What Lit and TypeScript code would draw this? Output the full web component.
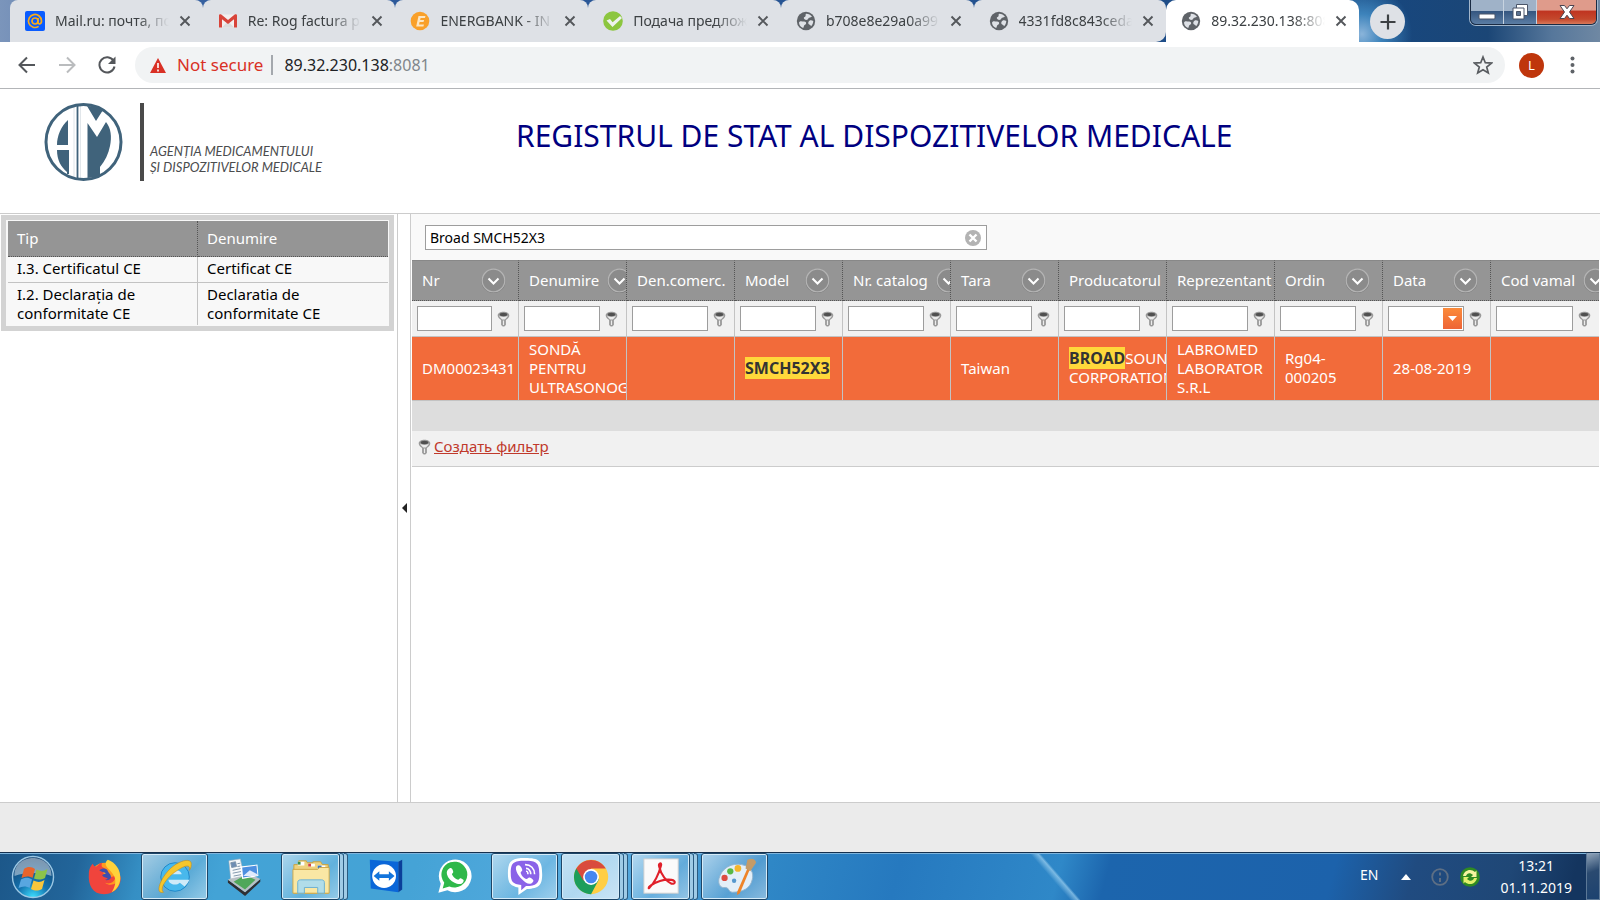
import { LitElement, html, css, svg, nothing } from "lit";
import { customElement, property } from "lit/decorators.js";
import { classMap } from "lit/directives/class-map.js";

const globe = svg`<circle cx="10" cy="10" r="9.2" fill="#5f6368"/><path d="M3 11.500C4 9.500 6 10.500 8 10.600c2 .1 2.400 1 2 2.400-.8 1-2 1-2.200 2.400 0 1.200-.6 1.600-1.300 1.300C4.200 15.500 3 13.500 3 11.500zM10 2.800c2.500-.1 4.600 1 6 3-1.200 0-1.400 1-2.800 1-1 .1-.8 1.600-2 2-1.600.4-3.600-.6-3.400-2 .2-1 1.600-.8 1.800-1.800.2-.8-.2-1.500.4-2.200zM13.500 9.800c1-.8 2.600-.4 3.800.2-.1 2-.9 4-2.300 5.200-.4-1.400-2.300-1.200-2.700-2.600-.2-1.100.3-2.200 1.200-2.800z" fill="#dee1e6"/>`;

const favicons: Record<string, unknown> = {
  mail: svg`<rect width="20" height="20" rx="2" fill="#0a5cff"/><circle cx="10" cy="10" r="3" fill="none" stroke="#f9ab1a" stroke-width="1.700"/><path d="M13 7v4.300c0 2.300 3.500 2.200 3.500-1.300A6.500 6.500 0 1 0 13.600 15.400" fill="none" stroke="#f9ab1a" stroke-width="1.700"/>`,
  gmail: svg`<path d="M1 3.500h18v13H1z" fill="#f3efef"/><path d="M4 16.500 10 10l6 6.500z" fill="#dcdcdc"/><path d="M1 16.500V4.500C1 3 2.500 3 3.300 3.600L10 9l6.700-5.400C17.500 3 19 3 19 4.500v12h-3V8.200L10 13 4 8.200v8.300z" fill="#d8443a"/>`,
  energ: svg`<circle cx="10" cy="10" r="9.300" fill="#f9a02a"/><path d="M8.500 5h7l-.6 2h-4.300l-.5 2h4l-.6 2H9.600l-.6 2.500h5l-.6 2H6.200z" fill="#fde6c2"/>`,
  check: svg`<circle cx="10" cy="10" r="9.800" fill="#8cc63f"/><path d="M3.500 9.500 7 8l2.600 3.300L17 5l2 2-9.500 9z" fill="#eef3ee"/>`,
  globe,
};

const tabs = [
  { icon: "mail", title: "Mail.ru: почта, по" },
  { icon: "gmail", title: "Re: Rog factura p" },
  { icon: "energ", title: "ENERGBANK - IN" },
  { icon: "check", title: "Подача предлож" },
  { icon: "globe", title: "b708e8e29a0a99" },
  { icon: "globe", title: "4331fd8c843ceda" },
  { icon: "globe", title: "89.32.230.138:808", active: true },
];

const columns = [
  "Nr", "Denumire", "Den.comerc.", "Model", "Nr. catalog", "Tara",
  "Producatorul", "Reprezentant", "Ordin", "Data", "Cod vamal",
];

const certificates = [
  ["I.3. Certificatul CE", "Certificat CE"],
  ["I.2. Declarația de conformitate CE", "Declaratia de conformitate CE"],
];

const keyIcon = html`<svg class="key" viewBox="0 0 13 16" width="13" height="16" aria-hidden="true">
  <path d="M6.500.8C3.300.8.7 2.300.7 4.400c0 2 1.600 2.900 3.400 4.600v5l1.600 1.400h1.600L8.900 14V9c1.800-1.700 3.400-2.600 3.400-4.600C12.300 2.300 9.700.8 6.500.8z" fill="#9a9a9a"/>
  <path d="M6.500 5.800c2 0 3.600-.6 4.300-1.400 0 1.500-1.700 2.600-2.900 4H5.100c-1.200-1.400-2.900-2.500-2.900-4 .7.8 2.300 1.400 4.300 1.400zM5.900 9.500h1.200V14H5.900z" fill="#ececec"/>
  <ellipse cx="6.500" cy="3.500" rx="3.800" ry="1.700" fill="#505050"/></svg>`;

const cross = html`<svg viewBox="0 0 12 12" width="12" height="12" aria-hidden="true"><path d="M1.500 1.500l9 9M10.500 1.500l-9 9" stroke="#54575b" stroke-width="1.900"/></svg>`;

@customElement("browser-chrome")
export class BrowserChrome extends LitElement {
  static styles = css`
    :host { display: block; font-family: "Noto Sans", "Open Sans", sans-serif; color: #3c4043; }
    button { border: 0; padding: 0; margin: 0; background: none; font: inherit; color: inherit; }
    svg { display: block; flex: none; }
    .strip {
      display: flex; height: 42px; padding-left: 10px;
      background:
        radial-gradient(circle at 1362px 34px, #8ab4da 0, #3d83bb 20px, transparent 50px),
        linear-gradient(90deg, #7b95bb 0, #2f5b9d 14%, #245290 60%, #17477f 86%, #1b4676 93%, #56779b 97%, #6f88a3 100%);
    }
    .tabs { display: flex; flex: 0 1 1349px; min-width: 0; }
    .tab {
      flex: 1 1 0; min-width: 0; display: flex; align-items: center;
      padding: 0 8px 0 15px; background: #dee1e6; border-radius: 8px 8px 0 0; position: relative;
    }
    .tab.divided::after {
      content: ""; position: absolute; right: -1px; top: 9px; height: 25px; width: 1px; background: #85888d;
    }
    .tab.before-active { border-radius: 8px 8px 10px 0; }
    .tab.active { background: #fff; border-radius: 10px 10px 0 0; }
    .title {
      flex: 1; min-width: 0; margin: 0 6px 0 10px; overflow: hidden; white-space: nowrap; text-align: left;
      font-size: 14px; line-height: 20px;
      -webkit-mask-image: linear-gradient(90deg, #000 calc(100% - 32px), transparent);
      mask-image: linear-gradient(90deg, #000 calc(100% - 32px), transparent);
    }
    .close { width: 20px; height: 20px; display: grid; place-items: center; }
    .new { width: 35px; height: 35px; margin: 4px 0 0 11px; border-radius: 50%; background: #dee1e6; display: grid; place-items: center; flex: none; }
    .window {
      margin: 0 3px 0 auto; height: 24px; display: flex; flex: none; border: 1px solid #1a2b43; border-top: 0;
      border-radius: 0 0 6px 6px; overflow: hidden; box-shadow: 0 0 0 1px #a3b7cc;
    }
    .window button { display: grid; place-items: center; width: 33px; background: linear-gradient(#9fb2c8 0 45%, #34557f 46%, #5b7da4); border-right: 1px solid #c7d3e0; }
    .window .quit { width: 59px; border-right: 0; background: linear-gradient(#df9b8b 0 42%, #c03420 46%, #c4482d 80%, #d8795a); }
    .bar { display: flex; align-items: center; height: 46px; background: #fff; border-bottom: 1px solid #b3b5b8; padding: 0 16px; }
    .nav { width: 40px; height: 40px; display: grid; place-items: center; flex: none; }
    .navs { display: flex; margin-left: -9px; }
    .omnibox {
      flex: 1; display: flex; align-items: center; height: 36px; border-radius: 18px; background: #f1f3f4;
      margin: 0 14px 0 8px; padding: 0 12px 0 15px; font-size: 17px; line-height: 22px; min-width: 0;
    }
    .warn { color: #d93025; margin-left: 11px; }
    .pipe { width: 2px; height: 20px; background: #a4a8ad; margin: 0 11px 0 8px; }
    .url { flex: 1; color: #202124; white-space: nowrap; font-size: 16px; }
    .port { color: #80868b; }
    .avatar { width: 25px; height: 25px; border-radius: 50%; background: #bf360c; color: #fff; font-size: 13px; display: grid; place-items: center; margin-right: 20px; }
    .dots { width: 16px; height: 24px; display: grid; place-items: center; margin-right: 4px; }
  `;

  render() {
    return html`
      <div class="strip">
        <div class="tabs">
          ${tabs.map((t, i) => html`
            <div class=${classMap({ tab: true, active: !!t.active, "before-active": i === 5, divided: i < 5 })}>
              <svg viewBox="0 0 20 20" width="20" height="20" aria-hidden="true">${favicons[t.icon]}</svg>
              <button class="title">${t.title}</button>
              <button class="close" aria-label="Close tab">${cross}</button>
            </div>`)}
        </div>
        <button class="new" aria-label="New tab"><svg width="16" height="16" viewBox="0 0 16 16"><path d="M8 .5v15M.5 8h15" stroke="#3c4043" stroke-width="2.200"/></svg></button>
        <div class="window">
          <button aria-label="Minimize"><svg width="18" height="16" viewBox="0 0 18 16"><rect x="1" y="10" width="16" height="5" rx="1" fill="#fff" stroke="#4a5568"/></svg></button>
          <button aria-label="Restore"><svg width="18" height="18" viewBox="0 0 18 18"><path d="M5.500 1.500h11v11h-11z" fill="#fff" stroke="#4a5568"/><path d="M2 5h11v11H2z" fill="#fff" stroke="#4a5568"/><path d="M5.500 8.500h4v4h-4z" fill="#5c7391" stroke="#4a5568"/></svg></button>
          <button class="quit" aria-label="Close"><svg width="16" height="16" viewBox="0 0 16 16"><path d="M1 1.500h4.500L8 4.800l2.500-3.300H15L10.500 8l4.500 6.500h-4.500L8 11.200l-2.500 3.300H1L5.500 8z" fill="#fff" stroke="#4c4450"/></svg></button>
        </div>
      </div>
      <div class="bar">
        <div class="navs">
          <button class="nav" aria-label="Back"><svg width="18" height="18" viewBox="0 0 18 18"><path d="M17 9H2M9 1.500 1.500 9 9 16.500" fill="none" stroke="#54575b" stroke-width="2"/></svg></button>
          <button class="nav" aria-label="Forward"><svg width="18" height="18" viewBox="0 0 18 18"><path d="M1 9h15M9 1.500 16.500 9 9 16.500" fill="none" stroke="#babcbe" stroke-width="2"/></svg></button>
          <button class="nav" aria-label="Reload"><svg width="18" height="18" viewBox="0 0 18 18"><path d="M15.500 4.800A7.600 7.600 0 1 0 16.500 10.500" fill="none" stroke="#54575b" stroke-width="2"/><path d="M17.500.5V8H10z" fill="#54575b"/></svg></button>
        </div>
        <div class="omnibox">
          <svg width="16" height="15" viewBox="0 0 16 15" aria-hidden="true"><path d="M8 0l8 15H0z" fill="#d93025"/><path d="M8 5v5M8 11.500v2" stroke="#fff" stroke-width="1.600"/></svg>
          <span class="warn">Not secure</span><span class="pipe"></span>
          <span class="url">89.32.230.138<span class="port">:8081</span></span>
          <button aria-label="Bookmark"><svg width="20" height="20" viewBox="0 0 20 20"><path d="M10 2l2.300 5.700 6.200.4-4.800 3.900 1.600 6L10 14.700 4.700 18l1.600-6L1.500 8.100l6.200-.4z" fill="none" stroke="#5a5d61" stroke-width="1.700"/></svg></button>
        </div>
        <button class="avatar">L</button>
        <button class="dots" aria-label="Menu"><svg width="5" height="18" viewBox="0 0 5 18"><g fill="#5f6368"><circle cx="2.500" cy="2.500" r="2"/><circle cx="2.500" cy="9" r="2"/><circle cx="2.500" cy="15.500" r="2"/></g></svg></button>
      </div>`;
  }
}

@customElement("registry-page")
export class RegistryPage extends LitElement {
  static styles = css`
    :host { display: flex; flex-direction: column; min-height: 0; background: #fff; color: #000;
      font: 15px/19px "Noto Sans", "Open Sans", sans-serif; }
    * { box-sizing: border-box; }
    svg { display: block; flex: none; }
    header { display: flex; height: 125px; border-bottom: 1px solid #ccc; padding: 14px 0 0 44px; }
    .brand { display: flex; width: 472px; height: 78px; }
    .rule { width: 4px; margin: 0 6px 0 17px; background: #4a4a4a; }
    .agency { align-self: flex-end; font: italic 13px/16px Lato, sans-serif; color: #4b4c4e; padding-bottom: 6px; white-space: nowrap; }
    h1 { margin: 12px 0 0; font: 400 30px/42px "Noto Sans", sans-serif; color: #000080; white-space: nowrap; }
    main { display: flex; flex: 1; min-height: 0; }
    .side { width: 398px; border-right: 1px solid #ccc; padding: 1px 3px 0 1px; flex: none; }
    .frame { border: 5px solid #d3d3d3; padding: 1px 1px 1px 2px; background: #f8f8f8; }
    table { border-collapse: separate; border-spacing: 0; table-layout: fixed; width: 100%; }
    th { font-weight: 400; text-align: left; color: #fff; background: #959595; }
    .docs th { height: 36px; padding: 0 9px; border-bottom: 1px dotted #555; }
    .docs td { padding: 2px 9px; height: 25px; vertical-align: top; border-top: 1px solid #c3c3c3; }
    .docs tr:first-child td { border-top: 0; }
    .docs td:first-child { border-right: 1px solid #c3c3c3; }
    .docs th:first-child { border-right: 1px dotted #555; width: 190px; }
    .split { width: 13px; border: solid #ccc; border-width: 0 1px 0 0; display: grid; place-items: center; flex: none; background: #fff; padding: 0; }
    .work { flex: 1; min-width: 0; }
    .search { display: flex; background: #f9f9f9; height: 46px; padding: 11px 14px; }
    .box { display: flex; align-items: center; flex: 0 1 562px; height: 25px; border: 1px solid #9d9d9d; background: #fff; padding: 0 4px; }
    .box input { flex: 1; border: 0; outline: 0; padding: 0; font: 14px/19px "Noto Sans", sans-serif; color: #000; background: none; }
    .clear { border: 0; padding: 0; background: none; }
    .grid { margin: 0 1px; border-bottom: 1px solid #ccc; }
    .data th, .data td { overflow: hidden; }
    .data th { height: 41px; padding: 0 12px 0 10px; border-top: 1px solid #888; border-bottom: 1px dotted #555; border-right: 1px dotted #555; }
    .data th:first-child { width: 107px; }
    .head { display: flex; justify-content: space-between; align-items: center; gap: 8px; white-space: nowrap; }
    .menu { flex: none; width: 25px; height: 25px; padding: 0; border: 0; background: none; }
    .filters td { height: 36px; background: #f1f1f1; border-bottom: 1px solid #c3c3c3; border-right: 1px solid #c3c3c3; padding: 0 8px 0 5px; }
    .filter { display: flex; align-items: center; gap: 5px; }
    .entry { flex: 1; min-width: 0; display: flex; height: 25px; border: 1px solid #9d9d9d; background: #fff; padding: 1px; }
    .entry input { flex: 1; min-width: 0; width: 0; border: 0; outline: 0; padding: 0 2px; font: inherit; background: none; }
    .drop { width: 19px; flex: none; border: 0; padding: 0; display: grid; place-items: center; background: linear-gradient(#fb8b3a, #ee6436); }
    .records td { height: 64px; padding: 2px 10px 3px; color: #fff; background: #f26b3a; border-bottom: 1px solid #c3c3c3; border-right: 1px solid #c3c3c3; }
    .data tr > :last-child { border-right: 0; }
    mark { background: #ffd83b; color: #333; font-weight: 700; font-size: 16px; line-height: 19px; }
    .blank { height: 30px; background: #ddd; }
    .create { display: flex; align-items: center; gap: 3px; height: 35px; padding: 0 6px 4px; background: #f1f1f1; }
    .create a { color: #c0392b; }
    footer { height: 50px; background: #ebebeb; border-top: 1px solid #ccc; flex: none; }
  `;

  render() {
    return html`
      <header>
        <div class="brand">
          <svg width="79" height="78" viewBox="0 0 79 78" role="img" aria-label="AM">
            <circle cx="39.500" cy="39" r="37.500" fill="#fff" stroke="#40637b" stroke-width="3"/>
            <path d="M24 17v25H13C13 33 17 23 24 17zM13 47h10v22C17 64 13 57 13 47zM43 3c6 0 11 1 16 4l-7 11zM43.500 20l9.500 14 9-15c5 6 6 15 4 24-1.500 8-5 15-10 21v8c-4 2-8 3-12.500 3z" fill="#40637b"/>
            <path d="M33.500 3v72" stroke="#40637b" stroke-width="1.800"/><path d="M30 3v72M36.500 3v72" stroke="#40637b" stroke-width=".4" opacity=".4"/>
            <path d="M24 47v24" stroke="#40637b" stroke-width="2"/>
          </svg>
          <span class="rule"></span>
          <span class="agency">AGENȚIA MEDICAMENTULUI<br />ȘI DISPOZITIVELOR MEDICALE</span>
        </div>
        <h1>REGISTRUL DE STAT AL DISPOZITIVELOR MEDICALE</h1>
      </header>
      <main>
        <section class="side">
          <div class="frame">
            <table class="docs">
              <thead><tr><th scope="col">Tip</th><th scope="col">Denumire</th></tr></thead>
              <tbody>${certificates.map((r) => html`<tr>${r.map((c) => html`<td>${c}</td>`)}</tr>`)}</tbody>
            </table>
          </div>
        </section>
        <button class="split" aria-label="Collapse panel"><svg width="5" height="10" viewBox="0 0 5 10"><path d="M5 0v10L0 5z" fill="#222"/></svg></button>
        <section class="work">
          <div class="search">
            <div class="box">
              <input aria-label="Search" .value=${"Broad SMCH52X3"} />
              <button class="clear" aria-label="Clear"><svg width="18" height="18" viewBox="0 0 18 18"><circle cx="9" cy="9" r="8" fill="#b3b3b3"/><path d="M5.500 5.500l7 7M12.500 5.500l-7 7" stroke="#fff" stroke-width="2.400"/></svg></button>
            </div>
          </div>
          <div class="grid">
            <table class="data">
              <thead>
                <tr>${columns.map((c) => html`<th scope="col"><div class="head"><span>${c}</span>
                  <button class="menu" aria-label="Column menu"><svg width="25" height="25" viewBox="0 0 25 25"><circle cx="12.500" cy="13" r="11.300" fill="none" stroke="#777" stroke-width="1.500"/><circle cx="12.500" cy="12.500" r="11.300" fill="#8b8b8b" stroke="#b4b4b4" stroke-width="1.300"/><path d="M7.500 10.500l5 5 5-5" fill="none" stroke="#fff" stroke-width="2"/></svg></button></div></th>`)}</tr>
              </thead>
              <tbody>
                <tr class="filters">${columns.map((c) => html`<td><div class="filter">
                  <span class="entry"><input aria-label="Filter ${c}" />${c === "Data"
                    ? html`<button class="drop" aria-label="Choose date"><svg width="9" height="5" viewBox="0 0 9 5"><path d="M0 0h9L4.500 5z" fill="#fff"/></svg></button>` : nothing}</span>${keyIcon}</div></td>`)}</tr>
                <tr class="records">
                  <td>DM00023431</td><td>SONDĂ PENTRU ULTRASONOGRAFIE</td><td></td><td><mark>SMCH52X3</mark></td><td></td>
                  <td>Taiwan</td><td><mark>BROAD</mark>SOUND CORPORATION</td><td>LABROMED LABORATOR S.R.L</td>
                  <td>Rg04-000205</td><td>28-08-2019</td><td></td>
                </tr>
              </tbody>
            </table>
            <div class="blank"></div>
            <div class="create">${keyIcon}<a href="#">Создать фильтр</a></div>
          </div>
        </section>
      </main>
      <footer></footer>`;
  }
}

const flag = svg`<path d="M13 14c4-3 8-2 11 0l-2.500 9c-3-2-7-2-11 0z" fill="#e8642c"/><path d="M25.500 14.500c4 2 7 2 11-.5L34 23c-4 2-7 2-11 .5z" fill="#8cc34a"/><path d="M10 24.500c4-2.500 8-2 11 0L18.500 33c-3-2-7-2-11 0z" fill="#58a6e0"/><path d="M22.500 25.500c4 2 7 2 11-.5l-2.500 9c-4 2-7 2-11 0z" fill="#f8c63c"/>`;

const apps: { name: string; icon: unknown; state?: string }[] = [
  { name: "Firefox", icon: svg`<circle cx="20" cy="22" r="16" fill="#ff9a1f"/><path d="M3 17C3 12 6 8 7 7c1 2 2 3 4 3 2-2 4-4 6-4-1 2-1 4 1 5l4 2c-2 1-4 2-4 4l4 3c3 2 7 1 9-1 0 8-6 10-11 8 6 5 14 1 16-7 2 9-5 19-17 19S2 30 3 17z" fill="#f0443c"/><path d="M23 3c8 3 13 10 13 19 0 6-3 12-9 15 3-5 5-10 3-16-2-5-7-8-9-12-1-2 0-5 2-6z" fill="#ffd23a"/><path d="M14 14c4-3 8-2 9 1 1 2 4 4 3 7-1 2-4 3-6 2l3-1c-2-2-5-1-6-4l4-2c-2-1-5-1-7-3z" fill="#3d4fae"/>` },
  { name: "Internet Explorer", state: "open", icon: svg`<circle cx="20" cy="21" r="15" fill="#48b8ec" stroke="#1f86c8"/><path d="M13 18c1-5 13-6 14 0zM13 24h22c-1 3-3 5-5 7l-5-4c-3 3-11 3-12-3z" fill="#cfeaf8"/><path d="M8 37C-3 40 6 18 19 9 27 3 38 1 37 8c0 3-1 5-2 6 2-8-7-4-14 1C12 21 3 33 8 37z" fill="#f5c62c" stroke="#c98b0f" stroke-width=".6"/>` },
  { name: "Scanner", icon: svg`<path d="M2 24l18 13 16-14v3L20 41 2 27z" fill="#2f2f33"/><path d="M2 24l17-9 17 8-16 14z" fill="#b8c0c4"/><path d="M8 26l12-7 11 5-11 10z" fill="#4fa75a"/><path d="M3 4l12-2 4 18-14 3z" fill="#f7f9fb" stroke="#a8b2bd" stroke-width=".6"/><path d="M5 6l5-1 1 5-5 1zM12 7l3-.5M12 10l3-.5M7 14l9-2M7 17l10-2M8 20l8-1.500" stroke="#7c93aa" fill="#6d8db4"/><path d="M15 10l18-2 1 12-17 3z" fill="#fff"/><path d="M17 11l15-2 1 10-15 2.500z" fill="#4c8fe0"/><path d="M18 20l7-6 8 4v2z" fill="#dfeafc"/>` },
  { name: "Explorer", state: "stack", icon: svg`<path d="M2 8h5V4h8l1 2h6V5h8l2 3h6v30H2z" fill="#eed27e" stroke="#c9a13e"/><path d="M6 5h7v4H6zM17 7h7v3h-7zM27 9h8v4h-8z" fill="#fff"/><path d="M6 5h3v3H6z" fill="#3b8f4b"/><path d="M17 7h3v3h-3z" fill="#d34545"/><path d="M27 9h4v3h-4z" fill="#3c79c4"/><path d="M1 13h26l2-2h10v27H1z" fill="#f9e7a4" stroke="#cfa848"/><path d="M6 38V27c0-2 1-3 3-3h22c2 0 3 1 3 3v11h-7v-6H13v6z" fill="#a9dcf1" fill-opacity=".9" stroke="#6ab0d2"/>` },
  { name: "TeamViewer", icon: svg`<path d="M4 3l30 2v32L5 33z" fill="#0a66d8"/><path d="M34 5l4-2v31l-4 3z" fill="#0b3f9a"/><circle cx="19" cy="20" r="12.500" fill="#fff"/><path d="M8 20l6-5v3h10v-3l6 5-6 5v-3H14v3z" fill="#1274dc"/>` },
  { name: "WhatsApp", icon: svg`<path d="M2.500 37.500L5 28A17.200 17.200 0 1 1 12 35z" fill="#fff"/><path d="M7 33l1.700-6A13.600 13.600 0 1 1 14 31z" fill="#2fb84a"/><path d="M14 12c2-1 3 0 4 3 .6 2-1 2-1.300 3 1.500 3 3.500 5 6.500 6 1.300-.3 1.500-2.500 3.300-1.500 3 1.500 3 1.800 2 4-2 3-6 2-9 .5-4-2-7-5-8-9-.6-3 .5-5 2.500-6z" fill="#fff"/>` },
  { name: "Viber", state: "open", icon: svg`<path d="M20 1c15 0 18 3 18 17 0 11-3 15-16 15.500L13 40v-8C4 30 2 27 2 17 2 4 6 1 20 1z" fill="#fff"/><path d="M20 4c12 0 15 2 15 14 0 10-3 12-14 12.500L16 35v-5.500C7 28 5 26 5 17 5 6 8 4 20 4z" fill="#8a63e8"/><path d="M12 9c2-1 4 1 5 4 .5 2-2 2-1.500 4 1 3 3 5 5.500 6 2 .5 2-2 4-1.500 3 1.500 5 3 3 5-3 4-8 0-11-3-5-4-9-13-5-14.500z" fill="#fff"/><path d="M20 8c6 0 10 4 10 10M21 12c3 0 5 3 5 6M21 15c2 0 2 1 2 3" fill="none" stroke="#fff" stroke-width="1.700"/>` },
  { name: "Chrome", state: "stack lit", icon: svg`<circle cx="20" cy="21" r="18" fill="#ffce44"/><path d="M20 21L4.500 12A18 18 0 0 0 20 39l8.500-16z" fill="#1c9e5b"/><path d="M20 12h15.500A18 18 0 0 0 4.500 12L12 25z" fill="#d94b3d"/><circle cx="20" cy="21" r="8.300" fill="#fff"/><circle cx="20" cy="21" r="6.600" fill="#4687f0"/>` },
  { name: "Acrobat", state: "stack", icon: svg`<rect x="2" y="2" width="36" height="36" fill="#fafafa" stroke="#cfcfcf"/><path d="M8 32c4-4 9-12 12-23 1-4-3-2-2 1 2 9 8 16 13 18 4 1 5-3 0-4-8-1-17 2-22 6-3 2-2 4-1 2z" fill="none" stroke="#e0202a" stroke-width="2.200"/>` },
  { name: "Paint", state: "open", icon: svg`<path d="M3 23C6 11 17 6 27 8c10 2 13 9 11 16-2 9-10 13-21 13-4 0-3-5-7-5-5 1-8-3-7-9z" fill="#e3eff8" stroke="#93b4cd"/><circle cx="9" cy="22" r="3.300" fill="#dd4b42"/><circle cx="15" cy="15" r="3.300" fill="#58b947"/><circle cx="23" cy="12" r="3.500" fill="#f5b52c"/><circle cx="19" cy="25" r="2.300" fill="#5598ce"/><path d="M33 12l2.500 1L25 38l-3 2 .5-4z" fill="#ee8428"/><path d="M31 12l2-9c5-3 9 0 9 3l-6 9z" fill="#c49b67"/>` },
];

@customElement("task-bar")
export class TaskBar extends LitElement {
  @property() time = "13:21";
  @property() date = "01.11.2019";

  static styles = css`
    :host {
      display: flex; height: 48px; box-sizing: border-box; border-top: 1px solid #15304d; color: #fff;
      font-family: "Noto Sans", "Open Sans", sans-serif; box-shadow: inset 0 1px 0 #7db4dc;
      background:
        linear-gradient(49deg, transparent 42%, #a9d8f4a0 50%, transparent 53%) 1030px 0 / 56px 48px no-repeat,
        linear-gradient(105deg, #1c5789 0, #22659a 5%, #358fc4 9%, #43a3d6 14%, #45a3d6 26%, #58ace0 38%, #2f87c6 48%, #2679bf 56%, #2f88c8 66%, #1c65ad 69%, #1c62ab 83%, #204b80 88%, #1f4776 94%, #14355f 98%);
    }
    button { border: 0; padding: 0; margin: 0; background: none; color: inherit; font: inherit; }
    svg { display: block; }
    .start { width: 70px; display: grid; place-items: center; padding-right: 4px; }
    .app { width: 70px; padding: 0 2px 0 1px; display: flex; }
    .face { flex: 1; display: grid; place-items: center; box-sizing: border-box; border: 1px solid transparent; }
    .open .face, .stack .face {
      border: 1px solid #1d4668; border-radius: 3px; box-shadow: inset 0 0 0 1px #d5ebf8;
      background: linear-gradient(135deg, #ffffff90, #ffffff48 40%, #ffffff28 60%, #ffffff70);
    }
    .face svg { margin-left: 2px; }
    .lit .face { background: linear-gradient(135deg, #ffffffa8, #ffffff88 50%, #ffffffb0); }
    .edge { width: 4px; border: 1px solid #2b5b80; border-left: 0; border-radius: 0 3px 3px 0; background: #9fcbe6; box-sizing: border-box; }
    .tray { margin-left: auto; display: flex; align-items: center; }
    .lang { font-size: 14px; line-height: 20px; margin-right: 23px; padding-bottom: 4px; }
    .arrow { margin-right: 20px; }
    .info { margin-right: 11px; }
    .clock { margin: 0 14px 0 20px; font-size: 14px; line-height: 22px; text-align: center; }
    .show { width: 14px; align-self: stretch; border: 1px solid #8aa3bd; border-color: #8aa3bd #5c7896 #5c7896; background: linear-gradient(160deg, #8fa3b8, #2a4a70 40%, #1c4270); }
  `;

  render() {
    return html`
      <button class="start" aria-label="Start"><svg width="44" height="44" viewBox="0 0 44 44">
        <defs><radialGradient id="orb" cx=".5" cy="1" r=".95"><stop offset="0" stop-color="#3ee0ff"/><stop offset=".4" stop-color="#1474b0"/><stop offset="1" stop-color="#12406e"/></radialGradient></defs>
        <circle cx="22" cy="22" r="20.500" fill="url(#orb)" stroke="#9cc8e4" stroke-width="1.400"/>
        <path d="M3.500 21C3 8 14 3 22 3s19 5 18.500 18c-9-4-28-4-37 0z" fill="#fff" fill-opacity=".45"/>${flag}</svg></button>
      ${apps.map((a) => html`<button class="app ${a.state ?? ""}" aria-label=${a.name}>
        <span class="face"><svg width="40" height="42" viewBox="0 0 42 42">${a.icon}</svg></span>
        ${a.state?.startsWith("stack") ? html`<span class="edge"></span><span class="edge"></span>` : nothing}
      </button>`)}
      <div class="tray">
        <button class="lang">EN</button>
        <button class="arrow" aria-label="Hidden icons"><svg width="10" height="6" viewBox="0 0 10 6"><path d="M5 0l5 6H0z" fill="#fff"/></svg></button>
        <svg class="info" width="18" height="18" viewBox="0 0 18 18"><circle cx="9" cy="9" r="7.800" fill="none" stroke="#5e6f84" stroke-width="1.800"/><path d="M9 4.500v3M9 10v4" stroke="#5e6f84" stroke-width="2"/></svg>
        <svg width="20" height="20" viewBox="0 0 20 20"><circle cx="10" cy="10" r="9.800" fill="#2f8a22"/><path d="M3 9c1-6 8-8 12-4l1.500-1.500V10H11l2-2c-3-3-6-2-7 1z" fill="#f6f3a0"/><path d="M17 11c-1 6-8 8-12 4l-1.500 1.500V10H9l-2 2c3 3 6 2 7-1z" fill="#e3f06c"/></svg>
        <div class="clock">${this.time}<br />${this.date}</div>
        <button class="show" aria-label="Show desktop"></button>
      </div>`;
  }
}

@customElement("app-root")
export class AppRoot extends LitElement {
  static styles = css`
    :host { display: flex; flex-direction: column; height: 100vh; min-width: 1200px; overflow: hidden; }
    .page { flex: 1; }
  `;

  render() {
    return html`<browser-chrome></browser-chrome><registry-page class="page"></registry-page><task-bar></task-bar>`;
  }
}
